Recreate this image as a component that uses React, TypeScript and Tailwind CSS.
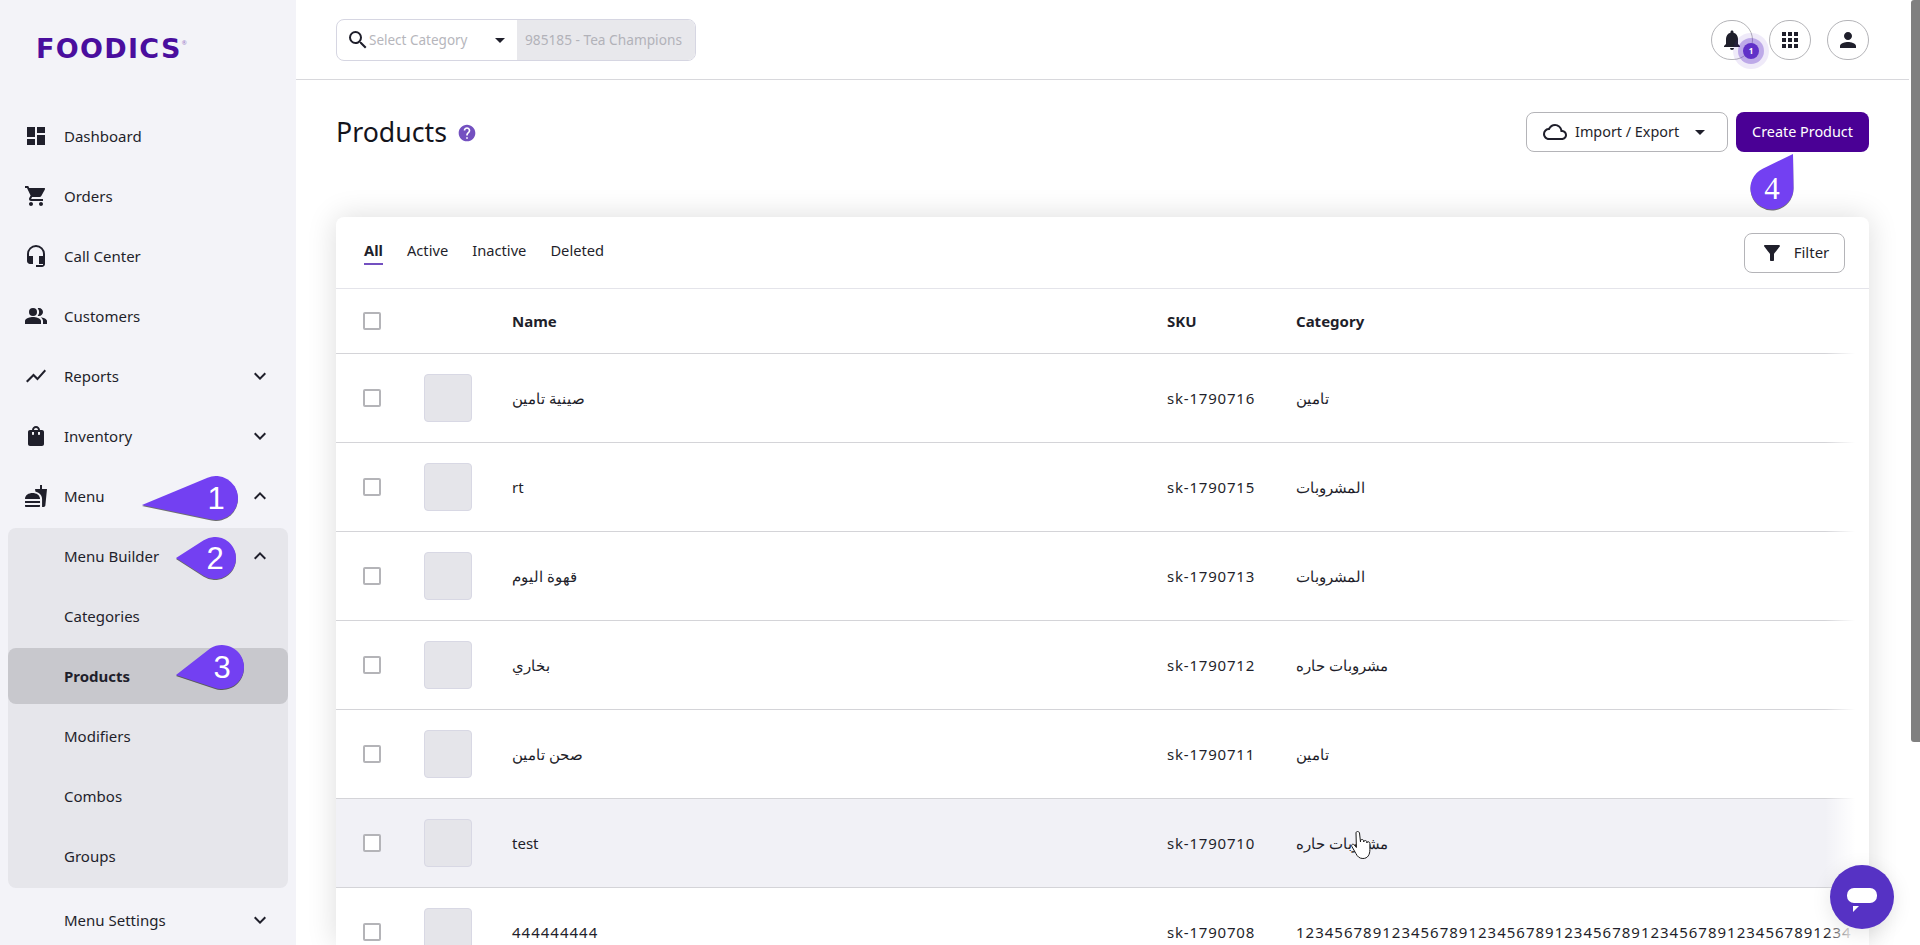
import React from "react";
import {
  MdDashboard, MdShoppingCart, MdHeadsetMic, MdPeopleAlt, MdShowChart, MdShoppingBag, MdFastfood,
  MdExpandMore, MdExpandLess, MdCloudQueue, MdArrowDropDown, MdNotifications, MdApps, MdPerson,
  MdFilterAlt, MdHelp, MdSearch,
} from "react-icons/md";

const top = [
  { label: "Dashboard", Icon: MdDashboard },
  { label: "Orders", Icon: MdShoppingCart },
  { label: "Call Center", Icon: MdHeadsetMic },
  { label: "Customers", Icon: MdPeopleAlt },
  { label: "Reports", Icon: MdShowChart, more: true },
  { label: "Inventory", Icon: MdShoppingBag, more: true },
];

function NavRow({ label, Icon, more, less }: any) {
  return (
    <div className="flex h-14 items-center pl-6 pr-6 text-[#1f1f2b]">
      <span className="flex w-10 shrink-0 text-[24px]">{Icon ? <Icon /> : null}</span>
      <span className="flex-1">{label}</span>
      {more ? <MdExpandMore className="text-[24px]" /> : null}
      {less ? <MdExpandLess className="text-[24px]" /> : null}
    </div>
  );
}

function Check() {
  return <span className="block h-[18px] w-[18px] rounded-[2px] border-2 border-[#b4b4b8] bg-white" />;
}

const rows = [
  { name: "صينية تامين", sku: "sk-1790716", cat: "تامين" },
  { name: "rt", sku: "sk-1790715", cat: "المشروبات" },
  { name: "قهوة اليوم", sku: "sk-1790713", cat: "المشروبات" },
  { name: "بخاري", sku: "sk-1790712", cat: "مشروبات حاره" },
  { name: "صحن تامين", sku: "sk-1790711", cat: "تامين" },
  { name: "test", sku: "sk-1790710", cat: "مشروبات حاره", hover: true },
  { name: "444444444", sku: "sk-1790708", cat: "1234567891234567891234567891234567891234567891234567891234", num: true },
];

function Callout({ tx, ty, cx, cy, r, n, serif }: any) {
  const dx = tx - cx, dy = ty - cy;
  const d = Math.hypot(dx, dy);
  const base = Math.atan2(dy, dx);
  const a = Math.acos(r / d);
  const p1 = [cx + r * Math.cos(base + a), cy + r * Math.sin(base + a)];
  const p2 = [cx + r * Math.cos(base - a), cy + r * Math.sin(base - a)];
  return (
    <g>
      <path
        d={`M${tx} ${ty}L${p1[0]} ${p1[1]}A${r} ${r} 0 1 1 ${p2[0]} ${p2[1]}Z`}
        fill="#7340f2"
        className="drop-shadow-[0_1px_0_rgba(0,0,0,0.55)]"
      />
      <text
        x={cx}
        y={cy + 11}
        textAnchor="middle"
        fill="#fff"
        fontSize="31"
        fontFamily={serif ? "'Liberation Serif', serif" : "'Liberation Sans', sans-serif"}
      >
        {n}
      </text>
    </g>
  );
}

export default function App() {
  return (
    <div className="relative flex h-[945px] w-[1920px] overflow-hidden bg-white text-[15px] text-[#1f1f2b] [font-family:'Noto_Sans','Liberation_Sans',sans-serif]">
      <aside className="flex h-full w-[296px] shrink-0 flex-col bg-[#f3f3f8]">
        <div className="flex h-[108px] shrink-0 items-start pl-9 pt-[32px]">
          <span className="text-[27px] leading-[34px] font-bold tracking-[1.3px] text-[#4a0e9e] [font-family:'DejaVu_Sans',sans-serif]">
            FOODICS
          </span>
          <span className="mt-[7px] text-[6px] leading-[8px] text-[#9a7cc8]">®</span>
        </div>
        <nav className="flex flex-col gap-1">
          {top.map((t) => (
            <NavRow key={t.label} {...t} />
          ))}
          <NavRow label="Menu" Icon={MdFastfood} less />
          <div className="mx-2 flex flex-col gap-1 rounded-lg bg-[#e6e6eb] pb-1">
            <div className="-mx-2"><NavRow label="Menu Builder" less /></div>
            <div className="-mx-2"><NavRow label="Categories" /></div>
            <div className="flex h-14 items-center rounded-lg bg-[#c8c8cd] pl-14 font-bold">Products</div>
            <div className="-mx-2"><NavRow label="Modifiers" /></div>
            <div className="-mx-2"><NavRow label="Combos" /></div>
            <div className="-mx-2"><NavRow label="Groups" /></div>
          </div>
          <NavRow label="Menu Settings" more />
        </nav>
      </aside>

      <main className="flex h-full min-w-0 flex-1 flex-col pr-[11px]">
        <header className="flex h-20 shrink-0 items-center justify-between border-b border-[#d8d8dc] pl-10 pr-10 pt-[1px]">
          <div className="flex h-[42px] w-[360px] overflow-hidden rounded-lg border border-[#d6d6e2]">
            <div className="flex w-[180px] items-center pl-[9px] text-[#b6b6bc]">
              <MdSearch className="shrink-0 text-[24px] text-[#1f1f2b]" />
              <span className="-ml-[1px] flex-1 text-[13.5px]">Select Category</span>
              <MdArrowDropDown className="mr-[5px] shrink-0 text-[24px] text-[#1f1f2b]" />
            </div>
            <div className="flex flex-1 items-center bg-[#e8e8ec] pl-2 text-[13.7px] text-[#b2b2b9]">985185 - Tea Champions</div>
          </div>
          <div className="flex items-center gap-4">
            <button className="relative flex h-10 w-[42px] items-center justify-center rounded-full border border-[#b4b4b8] text-[24px]">
              <MdNotifications />
              <span className="absolute left-[31px] top-[22px] flex h-4 w-4 items-center justify-center rounded-full bg-[#6030c8] text-[8px] font-bold text-white shadow-[0_0_0_5px_rgba(96,48,200,0.35),0_0_0_10px_rgba(96,48,200,0.1)]">
                1
              </span>
            </button>
            <button className="flex h-10 w-[42px] items-center justify-center rounded-full border border-[#b4b4b8] text-[24px]"><MdApps /></button>
            <button className="flex h-10 w-[42px] items-center justify-center rounded-full border border-[#b4b4b8] text-[24px]"><MdPerson /></button>
          </div>
        </header>

        <section className="flex min-h-0 flex-1 flex-col pl-10 pr-10">
          <div className="flex h-[137px] shrink-0 items-start justify-between pt-8">
            <div className="flex h-10 items-center pt-[1px]">
              <h1 className="text-[26.7px] text-[#14141c]">Products</h1>
              <MdHelp className="ml-[10px] text-[20px] text-[#7350c0]" />
            </div>
            <div className="flex gap-2">
              <button className="flex h-10 w-[202px] items-center rounded-lg border border-[#b4b4b8] pl-4 pr-[15px] text-[14.4px]">
                <MdCloudQueue className="mr-[8px] text-[24px]" />
                <span className="flex-1 text-left">Import / Export</span>
                <MdArrowDropDown className="text-[24px]" />
              </button>
              <button className="flex h-10 w-[133px] items-center justify-center rounded-lg bg-[#4a0095] text-[14.4px] text-white">Create Product</button>
            </div>
          </div>

          <div className="min-h-0 flex-1 overflow-hidden rounded-t-lg bg-white shadow-[0_0_30px_rgba(0,0,0,0.14)]">
            <div className="flex h-[72px] items-center justify-between border-b border-[#e4e4ea] pl-7 pr-6">
              <div className="flex gap-6 pb-[4px] text-[14.7px]">
                <span className="relative font-bold">
                  All
                  <span className="absolute -bottom-[3px] left-0 h-[2px] w-full bg-[#7350c0]" />
                </span>
                <span>Active</span>
                <span>Inactive</span>
                <span>Deleted</span>
              </div>
              <button className="flex h-10 w-[101px] items-center justify-center gap-[10px] rounded-lg border border-[#b4b4b8]">
                <MdFilterAlt className="text-[24px]" />
                Filter
              </button>
            </div>
            <div className="relative w-[1519px] overflow-hidden">
              <div className="grid h-[65px] grid-cols-[88px_88px_655px_129px_559px] items-center border-b border-[#d4d4d8] font-bold">
                <div className="pl-[27px]"><Check /></div>
                <div />
                <div>Name</div>
                <div>SKU</div>
                <div>Category</div>
              </div>
              {rows.map((r) => (
                <div
                  key={r.sku}
                  className={`grid h-[89px] grid-cols-[88px_88px_655px_129px_559px] items-center border-b border-[#d4d4d8] ${r.hover ? "bg-[#f1f1f6]" : ""}`}
                >
                  <div className="pl-[27px]"><Check /></div>
                  <div className="h-12 w-12 rounded-[4px] border border-[#d8d8e4] bg-[#e5e5ea]" />
                  <div dir="auto" className={`text-left ${r.num ? "tracking-[1px]" : ""}`}>{r.name}</div>
                  <div className="tracking-[0.8px]">{r.sku}</div>
                  <div className={`whitespace-nowrap text-left ${r.num ? "tracking-[1px]" : ""}`}>{r.cat}</div>
                </div>
              ))}
              <div className="absolute bottom-0 right-0 top-0 w-[30px] bg-gradient-to-l from-white to-transparent" />
            </div>
          </div>
        </section>
      </main>

      <div className="absolute right-0 top-0 h-[742px] w-[9px] rounded-l-[3px] bg-[#808080]" />

      <div className="absolute left-[1830px] top-[865px] flex h-16 w-16 items-center justify-center rounded-full bg-[#5632c4] pt-[6px] shadow-[0_4px_20px_rgba(0,0,0,0.1)]">
        <svg width="32" height="26" viewBox="0 0 32 26">
          <rect x="1" y="1" width="30" height="15" rx="7" fill="#fff" />
          <path d="M7 19h6l-6 6z" fill="#fff" />
        </svg>
      </div>

      <svg className="pointer-events-none absolute left-0 top-0" width="1920" height="945" viewBox="0 0 1920 945">
        <Callout tx={142} ty={505} cx={216} cy={498} r={22} n="1" />
        <Callout tx={176} ty={558} cx={215} cy={558} r={21} n="2" />
        <Callout tx={176} ty={675} cx={222} cy={667} r={22} n="3" />
        <Callout tx={1793} ty={154} cx={1772} cy={188} r={21.5} n="4" serif />
        <path
          transform="translate(0 -8)"
          d="M1356 841c0-2 3-2 3.500 0l1 9 0-1c0-2 3-2 3.200 0v1c0-2 3-2 3.200 0v1c0-2 3-1.500 3 .5v6c0 5-2 9-7 9-3.500 0-5.500-2-7-5l-4-7c-1-2 1-3 2.500-1.500l2 2.500z"
          fill="#fff"
          stroke="#1a1a1a"
          strokeWidth="1"
        />
      </svg>
    </div>
  );
}
